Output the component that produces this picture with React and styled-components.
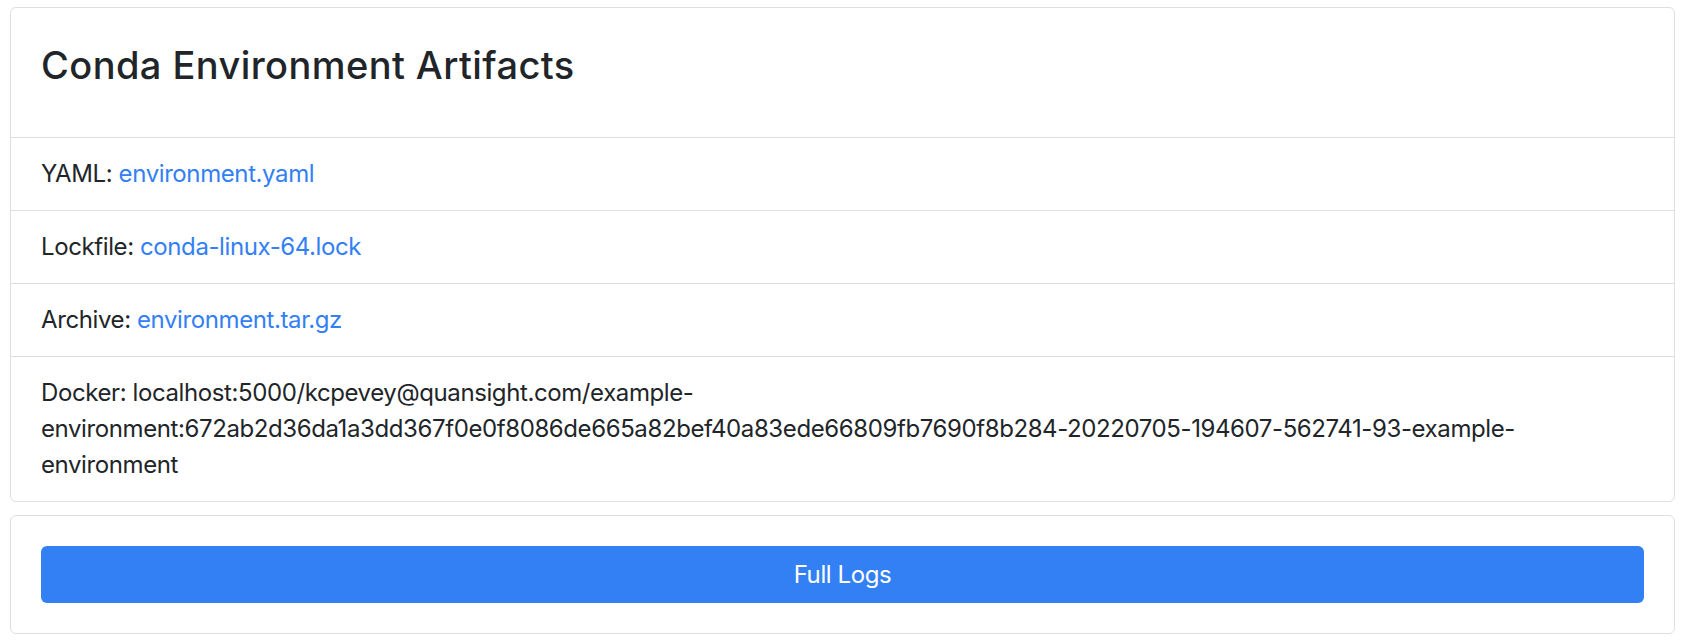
import React from "react";
import styled, { createGlobalStyle } from "styled-components";

const GlobalStyle = createGlobalStyle`
  html, body { margin: 0; padding: 0; background: #ffffff; }
  body {
    font-family: Inter, "Liberation Sans", Arial, sans-serif;
    color: #212529;
  }
`;

const Page = styled.div`
  display: flex;
  flex-direction: column;
  gap: 13px;
  padding: 7px 13px 0 10px;
`;

const Card = styled.section`
  display: flex;
  flex-direction: column;
  border: 1px solid #dfdfdf;
  border-radius: 6px;
  background: #fff;
  padding: ${(p) => (p.$padded ? "30px" : "0")};
`;

const Header = styled.div`
  padding: 34px 30px 49px;
  border-bottom: 1px solid #dfdfdf;
`;

const Title = styled.h3`
  margin: 0;
  font-size: 38px;
  font-weight: 500;
  line-height: 46px;
  letter-spacing: 0.42px;
  color: #212529;
`;

const List = styled.ul`
  list-style: none;
  margin: 0;
  padding: 0;
`;

const Item = styled.li`
  padding: 18px 30px;
  font-size: 24px;
  line-height: 36px;
  letter-spacing: -0.4px;
  border-bottom: 1px solid #dfdfdf;
  &:last-child { border-bottom: none; }
`;

const Link = styled.a`
  color: #3380f5;
  text-decoration: none;
`;

const Button = styled.button`
  display: block;
  width: 100%;
  height: 57px;
  border: none;
  border-radius: 6px;
  background: #3380f5;
  color: #fff;
  font-family: inherit;
  font-size: 24px;
  line-height: 36px;
  letter-spacing: -0.4px;
  cursor: pointer;
`;

const artifacts = [
  { label: "YAML", link: "environment.yaml" },
  { label: "Lockfile", link: "conda-linux-64.lock" },
  { label: "Archive", link: "environment.tar.gz" },
];

export default function App() {
  return (
    <>
      <GlobalStyle />
      <Page>
        <Card>
          <Header>
            <Title>Conda Environment Artifacts</Title>
          </Header>
          <List>
            {artifacts.map((a) => (
              <Item key={a.label}>
                {a.label}: <Link href="#">{a.link}</Link>
              </Item>
            ))}
            <Item>
              Docker: localhost:5000/kcpevey@quansight.com/example-environment:672ab2d36da1a3dd367f0e0f8086de665a82bef40a83ede66809fb7690f8b284-20220705-194607-562741-93-example-environment
            </Item>
          </List>
        </Card>
        <Card $padded>
          <Button>Full Logs</Button>
        </Card>
      </Page>
    </>
  );
}
